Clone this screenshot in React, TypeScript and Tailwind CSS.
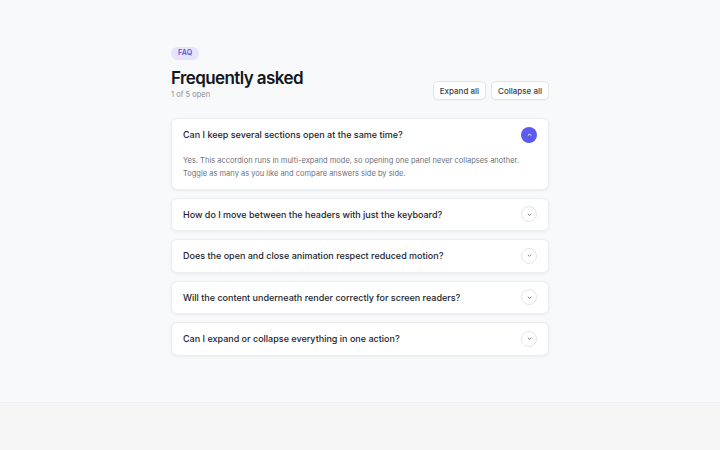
import { useState } from "react";

const items = [
  {
    q: "Can I keep several sections open at the same time?",
    a: "Yes. This accordion runs in multi-expand mode, so opening one panel never collapses another. Toggle as many as you like and compare answers side by side.",
  },
  {
    q: "How do I move between the headers with just the keyboard?",
    a: "Use Tab to reach a header, then Arrow keys, Home and End to jump between them. Enter or Space toggles the panel.",
  },
  {
    q: "Does the open and close animation respect reduced motion?",
    a: "Yes. When the system asks for reduced motion the panels open and close instantly.",
  },
  {
    q: "Will the content underneath render correctly for screen readers?",
    a: "Each header is a button with aria-expanded and aria-controls pointing at its region.",
  },
  {
    q: "Can I expand or collapse everything in one action?",
    a: "Use the Expand all and Collapse all buttons above the list.",
  },
];

function Chevron({ up }: { up: boolean }) {
  return (
    <svg width="7" height="7" viewBox="0 0 10 10" fill="none" stroke="currentColor" strokeWidth="1.4" strokeLinecap="round" strokeLinejoin="round">
      {up ? <path d="M3 6.2 5 4.2l2 2" /> : <path d="M3 4.2 5 6.2l2-2" />}
    </svg>
  );
}

export default function App() {
  const [open, setOpen] = useState<boolean[]>([true, false, false, false, false]);
  const count = open.filter(Boolean).length;

  return (
    <div className="min-h-[450px] bg-[#f5f5f5]" style={{ fontFamily: "Inter, 'Noto Sans', sans-serif" }}>
      <div className="border-b border-[#eeeff2] bg-[#f8f9fb] pt-[47px] pb-[46px]">
        <div className="mx-auto w-[378px]">
          <span className="flex h-[13px] w-fit items-center rounded-full bg-[#e4e4fb] px-[7px] text-[7px] font-semibold tracking-wide text-[#5753d8]">
            FAQ
          </span>
          <div className="mt-[7px] flex items-end justify-between">
            <div>
              <h1 className="text-[17px] leading-[22px] font-semibold tracking-[-0.035em] text-[#15161c]">Frequently asked</h1>
              <p className="mt-[1px] text-[7.5px] leading-[10px] text-[#8a8d96]">{count} of 5 open</p>
            </div>
            <div className="flex gap-[5px]">
              <button
                onClick={() => setOpen(open.map(() => true))}
                className="h-[19px] rounded-[5px] border border-[#e2e4e9] bg-white px-[6px] text-[8px] font-medium text-[#3a3d46] shadow-[0_1px_1px_rgba(0,0,0,0.03)]"
              >
                Expand all
              </button>
              <button
                onClick={() => setOpen(open.map(() => false))}
                className="h-[19px] rounded-[5px] border border-[#e2e4e9] bg-white px-[6px] text-[8px] font-medium text-[#3a3d46] shadow-[0_1px_1px_rgba(0,0,0,0.03)]"
              >
                Collapse all
              </button>
            </div>
          </div>

          <div className="mt-[18px] flex flex-col gap-[8px]">
            {items.map((it, i) => (
              <div key={i} className="rounded-[6px] border border-[#eceef1] bg-white shadow-[0_1px_3px_rgba(16,24,40,0.06)]">
                <button
                  onClick={() => setOpen(open.map((v, j) => (j === i ? !v : v)))}
                  className="flex h-[31.5px] w-full items-center justify-between px-[11px] text-left"
                >
                  <span className="text-[9px] font-medium text-[#22242b]">{it.q}</span>
                  <span
                    className={
                      open[i]
                        ? "flex h-[16px] w-[16px] items-center justify-center rounded-full bg-[#5b5bf0] text-white"
                        : "flex h-[16px] w-[16px] items-center justify-center rounded-full border border-[#e3e5ea] bg-white text-[#7a7e88]"
                    }
                  >
                    <Chevron up={open[i]} />
                  </span>
                </button>
                {open[i] && (
                  <p className="px-[11px] pb-[9px] pt-[3px] text-[7.5px] leading-[13px] text-[#6d717b]">{it.a}</p>
                )}
              </div>
            ))}
          </div>
        </div>
      </div>
    </div>
  );
}
